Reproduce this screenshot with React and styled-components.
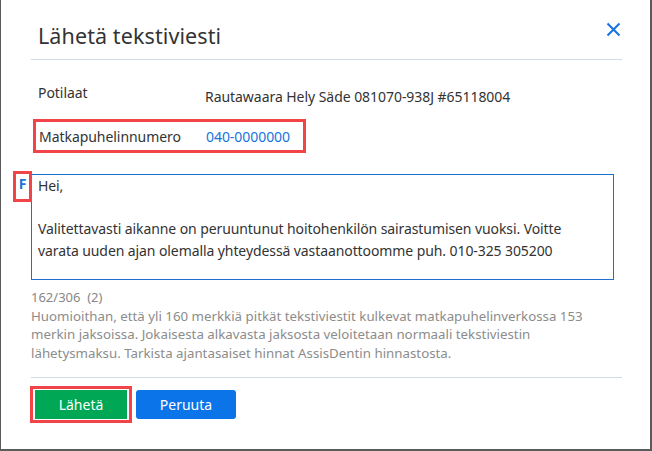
import React from 'react';
import styled, { createGlobalStyle } from 'styled-components';

const GlobalStyle = createGlobalStyle`
  html, body {
    margin: 0;
    padding: 0;
    background: #5b5b5b;
  }
  body {
    font-family: 'Noto Sans', 'Open Sans', sans-serif;
    color: #333;
  }
`;

const Dialog = styled.div`
  width: 649px;
  height: 449px;
  margin-left: 1px;
  background: #fff;
  box-sizing: border-box;
  padding: 0 28px 0 30px;
  display: flex;
  flex-direction: column;
`;

const Header = styled.div`
  height: 60px;
  box-sizing: border-box;
  display: flex;
  align-items: flex-start;
  justify-content: space-between;
  border-bottom: 1px solid #d4dce3;
  padding-left: 7px;
`;

const Title = styled.h2`
  margin: 21px 0 0;
  font-size: 21.5px;
  line-height: 30px;
  font-weight: 400;
  color: #333;
  letter-spacing: 0.1px;
`;

const CloseButton = styled.button`
  border: 0;
  background: none;
  padding: 0;
  width: 18px;
  height: 18px;
  margin-top: 20px;
  cursor: pointer;
  display: flex;
  align-items: center;
  justify-content: center;
`;

const Body = styled.div`
  padding-top: 23px;
  display: flex;
  flex-direction: column;
`;

const Row = styled.div`
  display: flex;
  align-items: ${(p) => p.$align || 'center'};
  font-size: 14px;
  height: 26px;
  letter-spacing: -0.05px;
`;

const Label = styled.span`
  width: ${(p) => p.$w || 174}px;
  padding-left: ${(p) => p.$pad ?? 7}px;
  box-sizing: border-box;
  color: #333;
`;

const Value = styled.span`
  color: ${(p) => (p.$link ? '#1674e0' : '#333')};
  padding-top: ${(p) => p.$drop || 0}px;
`;

const Marked = styled.div`
  display: inline-flex;
  align-self: flex-start;
  margin: 10px 0 0 2px;
  border: 3px solid #f04448;
  padding: 1px 13px 1px 0;
`;

const MessageWrap = styled.div`
  position: relative;
  margin-top: 21px;
`;

const FieldMark = styled.span`
  position: absolute;
  left: -18px;
  top: -3px;
  width: 13px;
  height: 25px;
  border: 3px solid #f04448;
  background: #fff;
  color: #1674e0;
  font-weight: 700;
  font-size: 14px;
  display: flex;
  justify-content: center;
  align-items: flex-start;
  line-height: 20px;
`;

const MessageBox = styled.textarea`
  display: block;
  width: 583px;
  height: 106px;
  box-sizing: border-box;
  border: 1px solid #1f6fd0;
  border-radius: 0;
  padding: 0 40px 0 6px;
  margin: 0;
  resize: none;
  outline: none;
  font-family: inherit;
  font-size: 14px;
  letter-spacing: -0.09px;
  line-height: 21.5px;
  color: #333;
  overflow: hidden;
`;

const Counter = styled.div`
  margin-top: 8px;
  font-size: 13px;
  color: #888;
  line-height: 18.5px;
  white-space: pre;
`;

const Notice = styled.p`
  margin: 0;
  font-size: 13.3px;
  color: #8c8c8c;
  line-height: 18.5px;
  width: 570px;
`;

const Footer = styled.div`
  margin-top: 15px;
  border-top: 1px solid #d4dce3;
  padding-top: 8px;
  display: flex;
  align-items: center;
  gap: 4px;
`;

const ButtonFrame = styled.div`
  border: 3px solid #f04448;
  padding: 1px 2px;
  margin-left: -1px;
  display: flex;
`;

const Button = styled.button`
  width: ${(p) => p.$w}px;
  height: 29px;
  border: 0;
  border-radius: ${(p) => (p.$primary ? 0 : 3)}px;
  background: ${(p) => (p.$primary ? '#00a855' : '#0a74e8')};
  color: #fff;
  font-family: inherit;
  font-size: 14px;
  cursor: pointer;
  padding: 0;
`;

const message =
  'Hei,\n\nValitettavasti aikanne on peruuntunut hoitohenkilön sairastumisen vuoksi. Voitte varata uuden ajan olemalla yhteydessä vastaanottoomme puh. 010-325 305200';

export default function App() {
  return (
    <>
      <GlobalStyle />
      <Dialog>
        <Header>
          <Title>Lähetä tekstiviesti</Title>
          <CloseButton aria-label="Sulje">
            <svg width="15" height="15" viewBox="0 0 15 15">
              <path d="M1.5 1.5 L13.5 13.5 M13.5 1.5 L1.5 13.5" stroke="#1674e0" strokeWidth="2" fill="none" />
            </svg>
          </CloseButton>
        </Header>
        <Body>
          <Row $align="flex-start">
            <Label>Potilaat</Label>
            <Value $drop={4}>Rautawaara Hely Säde 081070-938J #65118004</Value>
          </Row>
          <Marked>
            <Row>
              <Label $pad={3} $w={170}>Matkapuhelinnumero</Label>
              <Value $link>040-0000000</Value>
            </Row>
          </Marked>
          <MessageWrap>
            <FieldMark>F</FieldMark>
            <MessageBox defaultValue={message} />
          </MessageWrap>
          <Counter>{'162/306  (2)'}</Counter>
          <Notice>
            Huomioithan, että yli 160 merkkiä pitkät tekstiviestit kulkevat matkapuhelinverkossa 153
            merkin jaksoissa. Jokaisesta alkavasta jaksosta veloitetaan normaali tekstiviestin
            lähetysmaksu. Tarkista ajantasaiset hinnat AssisDentin hinnastosta.
          </Notice>
        </Body>
        <Footer>
          <ButtonFrame>
            <Button $primary $w={92}>Lähetä</Button>
          </ButtonFrame>
          <Button $w={100}>Peruuta</Button>
        </Footer>
      </Dialog>
    </>
  );
}
